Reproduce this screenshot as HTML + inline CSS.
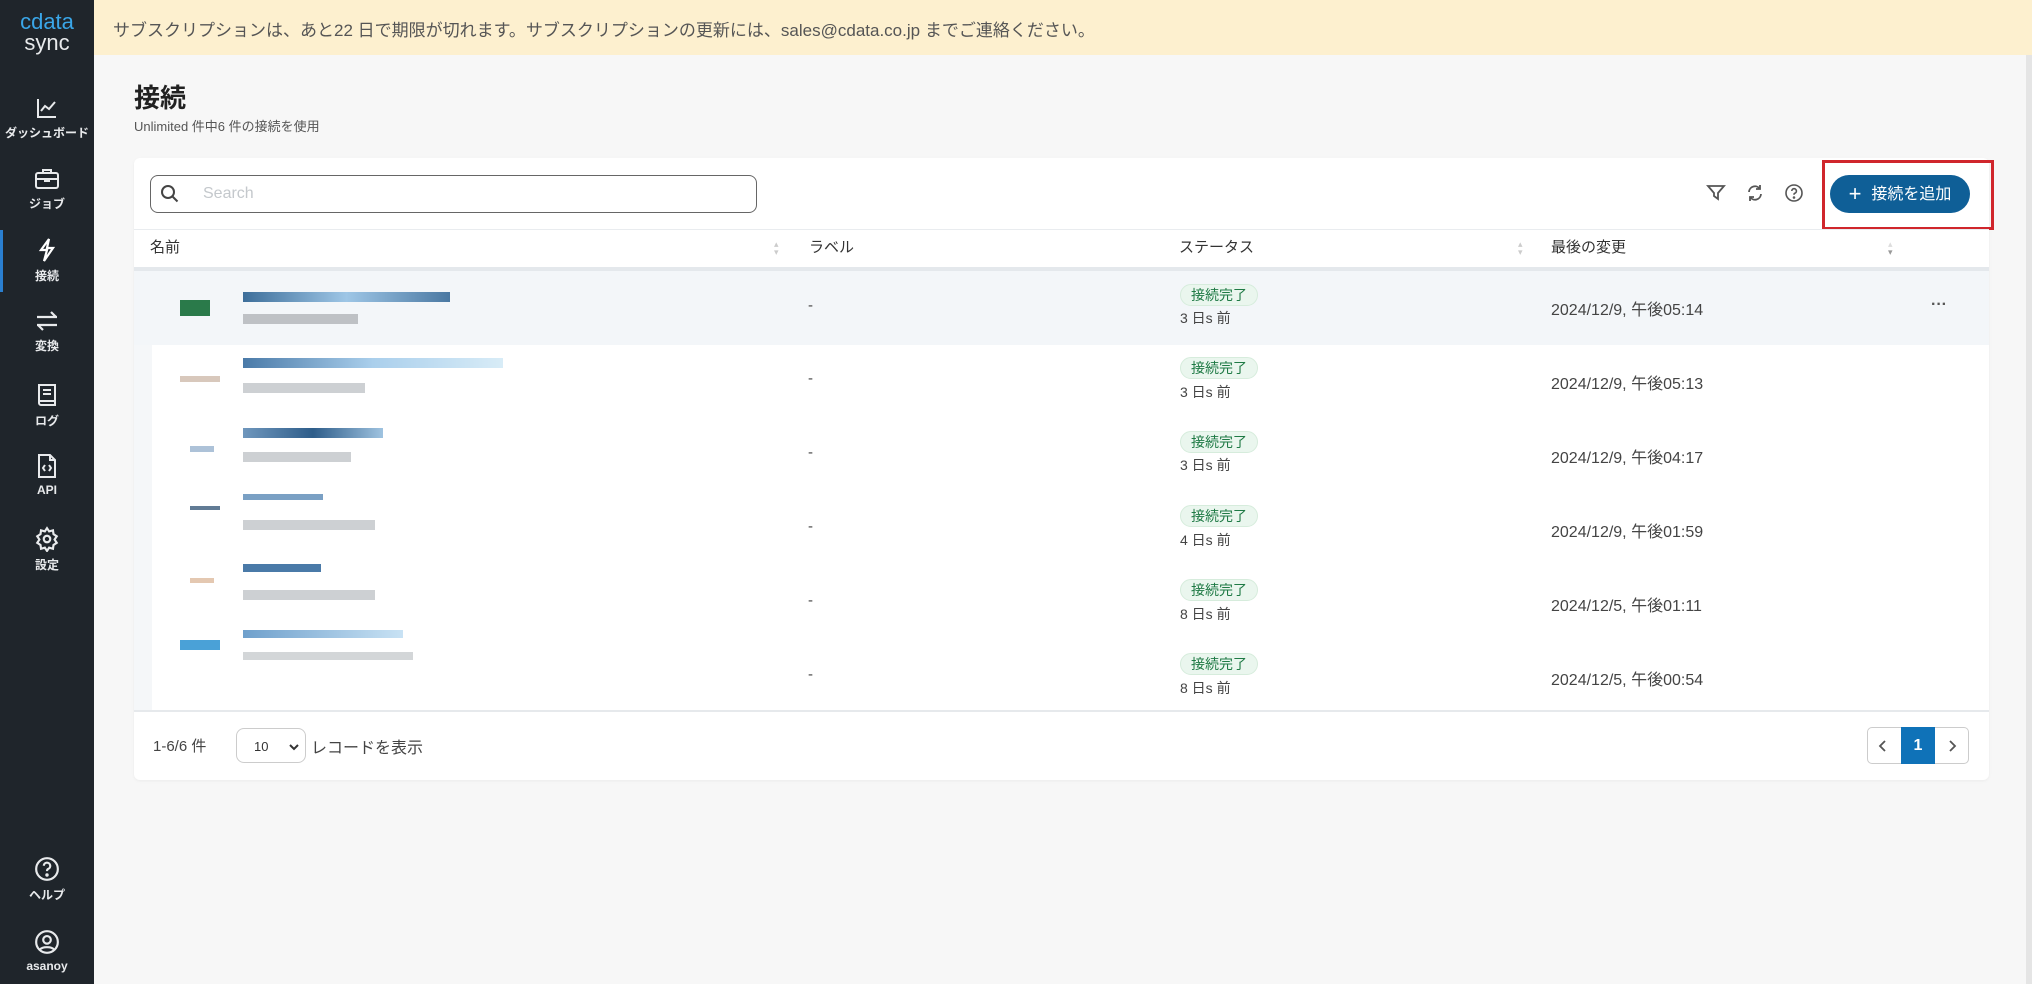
<!DOCTYPE html>
<html><head><meta charset="utf-8"><style>
*{box-sizing:border-box;margin:0;padding:0}
body{width:2032px;height:984px;background:#f7f7f7;font-family:"Liberation Sans","Noto Sans CJK JP",sans-serif;color:#333;position:relative;overflow:hidden}
.abs{position:absolute}
.side{left:0;top:0;width:94px;height:984px;background:#1f252b}
.nav{position:absolute;left:0;width:94px;text-align:center;color:#e8eaec;font-size:12px;font-weight:bold}
.nav svg{display:block;margin:0 auto 4px}
.banner{left:94px;top:0;width:1938px;height:55px;background:#fdf0cf;font-size:17px;color:#555;padding:16px 0 0 19px}
.card{left:134px;top:158px;width:1855px;height:622px;background:#fff;border-radius:6px;box-shadow:0 1px 3px rgba(0,0,0,.05)}
.th{top:229px;height:38px;font-size:15px;color:#333;line-height:38px}
.row{left:134px;width:1855px;height:74px}
.badge{position:absolute;left:1180px;width:78px;height:22px;border-radius:11px;background:#eaf6ee;border:1px solid #d6ecdc;color:#1f7a45;font-size:14px;text-align:center;line-height:20px}
.ago{position:absolute;left:1180px;font-size:14px;color:#444}
.date{position:absolute;left:1551px;font-size:16px;color:#444}
.dash{position:absolute;left:808px;font-size:15px;color:#444}
.blk{position:absolute;height:10px}
</style></head><body>
<div class="abs side">
 <div class="abs" style="left:10px;top:12px;width:74px;text-align:center;color:#3aa6e8;font-size:22px;font-weight:normal;line-height:20px">cdata</div>
 <div class="abs" style="left:0;top:32px;width:94px;text-align:center;color:#e8eaec;font-size:22px;line-height:22px">sync</div>
 <div class="abs" style="left:0;top:230px;width:3px;height:62px;background:#2a7fd0"></div>
 <div class="nav" style="top:96px"><svg width="24" height="24" viewBox="0 0 24 24" fill="none" stroke="#e8eaec" stroke-width="2"><path d="M3 3v18h18M6 15l4-5 4 3 6-7"/></svg>ダッシュボード</div>
 <div class="nav" style="top:167px"><svg width="26" height="24" viewBox="0 0 26 24" fill="none" stroke="#e8eaec" stroke-width="2"><rect x="2" y="6" width="22" height="15" rx="2"/><path d="M9 6V3h8v3M2 12h22M11 12v2h4v-2"/></svg>ジョブ</div>
 <div class="nav" style="top:237px"><svg width="24" height="26" viewBox="0 0 24 26" fill="none" stroke="#fff" stroke-width="2.2"><path d="M14 2L6 13h6l-3 11 9-13h-6z"/></svg>接続</div>
 <div class="nav" style="top:309px"><svg width="26" height="24" viewBox="0 0 26 24" fill="none" stroke="#e8eaec" stroke-width="2.2"><path d="M3 8h20M17 3l5 5M23 16H3M9 21l-5-5"/></svg>変換</div>
 <div class="nav" style="top:382px"><svg width="22" height="26" viewBox="0 0 22 26" fill="none" stroke="#e8eaec" stroke-width="2"><path d="M3 3h16v20H5a2 2 0 0 1-2-2zM3 19h16M7 8h8M7 12h8"/></svg>ログ</div>
 <div class="nav" style="top:453px"><svg width="22" height="26" viewBox="0 0 22 26" fill="none" stroke="#e8eaec" stroke-width="2"><path d="M3 2h11l5 5v17H3zM14 2v5h5M9 12l-2 3 2 3M13 12l2 3-2 3"/></svg>API</div>
 <div class="nav" style="top:526px"><svg width="26" height="26" viewBox="0 0 24 24" fill="none" stroke="#e8eaec" stroke-width="2"><circle cx="12" cy="12" r="3"/><path d="M12 2l2 3 3.5-1 .5 3.5 3 2-2 3 2 3-3 2-.5 3.5-3.5-1-2 3-2-3-3.5 1L6 17.5l-3-2 2-3-2-3 3-2L6.5 4 10 5z"/></svg>設定</div>
 <div class="nav" style="top:856px"><svg width="26" height="26" viewBox="0 0 24 24" fill="none" stroke="#e8eaec" stroke-width="2"><circle cx="12" cy="12" r="10"/><path d="M9 9a3 3 0 1 1 4 3c-1 .5-1 1-1 2"/><circle cx="12" cy="17.5" r=".6" fill="#e8eaec"/></svg>ヘルプ</div>
 <div class="nav" style="top:929px"><svg width="26" height="26" viewBox="0 0 24 24" fill="none" stroke="#e8eaec" stroke-width="2"><circle cx="12" cy="12" r="10"/><circle cx="12" cy="10" r="3.5"/><path d="M5.5 19c2-3 11-3 13 0"/></svg>asanoy</div>
</div>
<div class="abs banner">サブスクリプションは、あと22 日で期限が切れます。サブスクリプションの更新には、sales@cdata.co.jp までご連絡ください。</div>
<div class="abs" style="left:2026px;top:55px;width:6px;height:929px;background:#e5e5e5"></div>
<div class="abs" style="left:134px;top:78px;font-size:26px;font-weight:bold;color:#222">接続</div>
<div class="abs" style="left:134px;top:116px;font-size:13px;color:#555">Unlimited 件中6 件の接続を使用</div>
<div class="abs card"></div>
<div class="abs" style="left:150px;top:175px;width:607px;height:38px;border:1px solid #666;border-radius:8px"></div>
<svg class="abs" style="left:160px;top:184px" width="20" height="20" viewBox="0 0 20 20" fill="none" stroke="#444" stroke-width="2"><circle cx="8" cy="8" r="6"/><path d="M12.5 12.5l5 5"/></svg>
<div class="abs" style="left:203px;top:185px;font-size:16px;color:#c4c8cc">Search</div>
<svg class="abs" style="left:1706px;top:183px" width="20" height="20" viewBox="0 0 20 20" fill="none" stroke="#555" stroke-width="1.8"><path d="M2 3h16l-6 7v6l-4-3v-3z"/></svg>
<svg class="abs" style="left:1745px;top:183px" width="20" height="20" viewBox="0 0 20 20" fill="none" stroke="#555" stroke-width="1.8"><path d="M4 9a6 6 0 0 1 11-3M16 11a6 6 0 0 1-11 3M15 2v4h-4M5 18v-4h4"/></svg>
<svg class="abs" style="left:1784px;top:183px" width="20" height="20" viewBox="0 0 20 20" fill="none" stroke="#555" stroke-width="1.6"><circle cx="10" cy="10" r="8"/><path d="M7.8 8a2.3 2.3 0 1 1 3 2.2c-.8.3-.8.8-.8 1.5"/><circle cx="10" cy="14.5" r=".5" fill="#555"/></svg>
<div class="abs" style="left:1822px;top:160px;width:172px;height:70px;border:3px solid #d0262c"></div>
<div class="abs" style="left:1830px;top:175px;width:140px;height:38px;border-radius:19px;background:#0f5f97;color:#fff;font-size:16px;line-height:38px;text-align:center"><span style="font-size:22px;vertical-align:-2px;margin-right:10px">+</span>接続を追加</div>
<div class="abs" style="left:134px;top:229px;width:1855px;height:1px;background:#e9ecef"></div>
<div class="abs" style="left:134px;top:267px;width:1855px;height:4px;background:#e4e8ec"></div>
<div class="abs th" style="left:150px">名前</div>
<div class="abs th" style="left:809px">ラベル</div>
<div class="abs th" style="left:1179px">ステータス</div>
<div class="abs th" style="left:1551px">最後の変更</div>
<div class="abs" style="left:774px;top:240px;font-size:9px;color:#ccc;line-height:8px">▴<br>▾</div>
<div class="abs" style="left:1518px;top:240px;font-size:9px;color:#ccc;line-height:8px">▴<br>▾</div>
<div class="abs" style="left:1888px;top:240px;font-size:9px;color:#999;line-height:8px"><span style="color:#ddd">▴</span><br>▾</div>
<div class="abs row" style="top:271px;background:#f3f6f9"></div>
<div class="abs" style="left:134px;top:345px;width:18px;height:365px;background:#f5f7f9"></div>

<div class="abs" style="left:180px;top:300px;width:30px;height:16px;background:#2a7a4a"></div>
<div class="blk" style="left:243px;top:292px;width:207px;background:linear-gradient(90deg,#3d6e9a,#9ec6e6,#4a78a2)"></div>
<div class="blk" style="left:243px;top:314px;width:115px;background:#b0b4b8;opacity:.8"></div>
<div class="dash" style="top:297px">-</div><div class="badge" style="top:284px">接続完了</div><div class="ago" style="top:308px">3 日s 前</div><div class="date" style="top:296px">2024/12/9, 午後05:14</div>
<div class="abs" style="left:1931px;top:296px;font-size:16px;color:#555;font-weight:bold">···</div>

<div class="blk" style="left:180px;top:376px;width:40px;height:6px;background:#c8b0a0;opacity:.7"></div>
<div class="blk" style="left:243px;top:358px;width:260px;background:linear-gradient(90deg,#4a7aa8,#aacfec,#d8ecf7)"></div>
<div class="blk" style="left:243px;top:383px;width:122px;background:#b8bcc0;opacity:.7"></div>
<div class="dash" style="top:370px">-</div><div class="badge" style="top:357px">接続完了</div><div class="ago" style="top:382px">3 日s 前</div><div class="date" style="top:370px">2024/12/9, 午後05:13</div>

<div class="blk" style="left:190px;top:446px;width:24px;height:6px;background:#8aa8c8;opacity:.7"></div>
<div class="blk" style="left:243px;top:428px;width:140px;background:linear-gradient(90deg,#6f97bd,#2e5d8a,#9fc3e0)"></div>
<div class="blk" style="left:243px;top:452px;width:108px;background:#b8bcc0;opacity:.7"></div>
<div class="dash" style="top:444px">-</div><div class="badge" style="top:431px">接続完了</div><div class="ago" style="top:455px">3 日s 前</div><div class="date" style="top:444px">2024/12/9, 午後04:17</div>

<div class="blk" style="left:190px;top:506px;width:30px;height:4px;background:#3a5a7a;opacity:.8"></div>
<div class="blk" style="left:243px;top:494px;width:80px;height:6px;background:#7aa0c4"></div>
<div class="blk" style="left:243px;top:520px;width:132px;background:#b8bcc0;opacity:.7"></div>
<div class="dash" style="top:518px">-</div><div class="badge" style="top:505px">接続完了</div><div class="ago" style="top:530px">4 日s 前</div><div class="date" style="top:518px">2024/12/9, 午後01:59</div>

<div class="blk" style="left:190px;top:578px;width:24px;height:5px;background:#d8b090;opacity:.7"></div>
<div class="blk" style="left:243px;top:564px;width:78px;height:8px;background:#4a7aa8"></div>
<div class="blk" style="left:243px;top:590px;width:132px;background:#b8bcc0;opacity:.7"></div>
<div class="dash" style="top:592px">-</div><div class="badge" style="top:579px">接続完了</div><div class="ago" style="top:604px">8 日s 前</div><div class="date" style="top:592px">2024/12/5, 午後01:11</div>

<div class="blk" style="left:180px;top:640px;width:40px;height:10px;background:#2a90d0;opacity:.85"></div>
<div class="blk" style="left:243px;top:630px;width:160px;height:8px;background:linear-gradient(90deg,#6fa0cc,#c8e2f4)"></div>
<div class="blk" style="left:243px;top:652px;width:170px;height:8px;background:#c0c4c8;opacity:.7"></div>
<div class="dash" style="top:666px">-</div><div class="badge" style="top:653px">接続完了</div><div class="ago" style="top:678px">8 日s 前</div><div class="date" style="top:666px">2024/12/5, 午後00:54</div>

<div class="abs" style="left:134px;top:710px;width:1855px;height:2px;background:#e6e9ec"></div>
<div class="abs" style="left:153px;top:735px;font-size:15px;color:#444">1-6/6 件</div>
<div class="abs" style="left:236px;top:728px;width:70px;height:35px;border:1px solid #ccc;border-radius:8px;font-size:13px;color:#333;padding:10px 0 0 17px">10<svg style="position:absolute;left:52px;top:14px" width="10" height="8" viewBox="0 0 10 8" fill="none" stroke="#333" stroke-width="2"><path d="M1 2l4 4 4-4"/></svg></div>
<div class="abs" style="left:311px;top:734px;font-size:16px;color:#444">レコードを表示</div>
<div class="abs" style="left:1867px;top:727px;width:102px;height:37px;border:1px solid #ccc;border-radius:5px"></div>
<div class="abs" style="left:1901px;top:727px;width:34px;height:37px;background:#0f72b8;color:#fff;font-size:16px;font-weight:bold;text-align:center;line-height:37px">1</div>
<svg class="abs" style="left:1878px;top:739px" width="10" height="14" viewBox="0 0 10 14" fill="none" stroke="#555" stroke-width="1.8"><path d="M7 2L2 7l5 5"/></svg>
<svg class="abs" style="left:1947px;top:739px" width="10" height="14" viewBox="0 0 10 14" fill="none" stroke="#555" stroke-width="1.8"><path d="M3 2l5 5-5 5"/></svg>
</body></html>
